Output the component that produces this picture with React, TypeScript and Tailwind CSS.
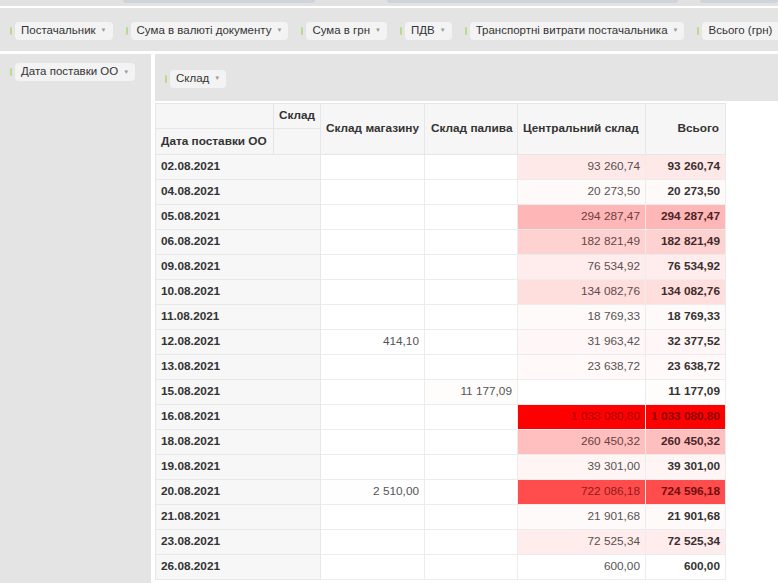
import React from 'react';

type Row = {
  date: string;
  shop?: number;
  fuel?: number;
  central?: number;
  total: number;
};

const rows: Row[] = [
  { date: '02.08.2021', central: 93260.74, total: 93260.74 },
  { date: '04.08.2021', central: 20273.5, total: 20273.5 },
  { date: '05.08.2021', central: 294287.47, total: 294287.47 },
  { date: '06.08.2021', central: 182821.49, total: 182821.49 },
  { date: '09.08.2021', central: 76534.92, total: 76534.92 },
  { date: '10.08.2021', central: 134082.76, total: 134082.76 },
  { date: '11.08.2021', central: 18769.33, total: 18769.33 },
  { date: '12.08.2021', shop: 414.1, central: 31963.42, total: 32377.52 },
  { date: '13.08.2021', central: 23638.72, total: 23638.72 },
  { date: '15.08.2021', fuel: 11177.09, total: 11177.09 },
  { date: '16.08.2021', central: 1033080.8, total: 1033080.8 },
  { date: '18.08.2021', central: 260450.32, total: 260450.32 },
  { date: '19.08.2021', central: 39301.0, total: 39301.0 },
  { date: '20.08.2021', shop: 2510.0, central: 722086.18, total: 724596.18 },
  { date: '21.08.2021', central: 21901.68, total: 21901.68 },
  { date: '23.08.2021', central: 72525.34, total: 72525.34 },
  { date: '26.08.2021', central: 600.0, total: 600.0 },
];

const MAX = 1033080.8;

const fmt = (n?: number) => {
  if (n === undefined) return '';
  const [int, dec] = n.toFixed(2).split('.');
  return int.replace(/\B(?=(\d{3})+(?!\d))/g, ' ') + ',' + dec;
};

// heat map colour, white -> red by share of max
const heat = (n?: number, bold = false) => {
  if (n === undefined) return {};
  const r = n / MAX;
  const c = Math.round(255 * (1 - r));
  const base = bold ? [51, 51, 51] : [85, 85, 85];
  const dark = bold ? [140, 0, 0] : [175, 0, 0];
  const t = base.map((b, i) => Math.round(b + (dark[i] - b) * r));
  return {
    backgroundColor: `rgb(255, ${c}, ${c})`,
    color: `rgb(${t[0]}, ${t[1]}, ${t[2]})`,
  };
};

const Pill = ({ label }: { label: string }) => (
  <div className="flex items-center gap-[3px] shrink-0">
    <span className="w-[2px] h-[8px] bg-[#b9db8c] rounded-sm" />
    <span className="flex items-center h-[18px] px-[6px] rounded-[4px] bg-[#f3f3f3] text-[11.5px] text-[#333] whitespace-nowrap">
      {label}
      <span className="ml-[5px] text-[6px] text-[#999]">▼</span>
    </span>
  </div>
);

const th = 'border border-[#e6e6e6] bg-[#f6f6f6] font-bold text-[#333] whitespace-nowrap';
const td = 'border border-[#ececec] text-right px-[5px] whitespace-nowrap overflow-hidden';

export default function App() {
  return (
    <div className="w-[778px] h-[583px] overflow-hidden bg-white font-['Liberation_Sans',Arial,sans-serif]">
      {/* top strip */}
      <div className="h-[6px] bg-[#e2e2e2] flex items-start">
        <div className="ml-[123px] w-[192px] h-[3px] bg-[#cfd3dc] rounded-b-sm" />
        <div className="ml-[72px] w-[291px] h-[3px] bg-[#cfd3dc] rounded-b-sm" />
        <div className="ml-[22px] flex-1 h-[3px] bg-[#cfd3dc] rounded-b-sm" />
      </div>
      <div className="h-[2px] bg-white" />

      {/* filter fields */}
      <div className="h-[43px] bg-[#e4e4e4] flex items-center gap-[13px] pl-[10px] pt-[2px] overflow-hidden">
        <Pill label="Постачальник" />
        <Pill label="Сума в валюті документу" />
        <Pill label="Сума в грн" />
        <Pill label="ПДВ" />
        <Pill label="Транспортні витрати постачальника" />
        <Pill label="Всього (грн)" />
      </div>
      <div className="h-[3px] bg-white" />

      <div className="flex h-[529px]">
        {/* row fields */}
        <div className="w-[151px] bg-[#e4e4e4] pt-[9px] pl-[10px] shrink-0">
          <Pill label="Дата поставки ОО" />
        </div>
        <div className="w-[4px] bg-white shrink-0" />

        <div className="flex-1 flex flex-col overflow-hidden">
          <div className="h-[47px] shrink-0 bg-[#e4e4e4] flex items-center pl-[10px] pt-[2px]">
            <Pill label="Склад" />
          </div>
          <div className="h-[2px] shrink-0 bg-white" />

          <table className="border-collapse table-fixed w-[570px] text-[11.8px] shrink-0">
            <colgroup>
              <col className="w-[118px]" />
              <col className="w-[47px]" />
              <col className="w-[104px]" />
              <col className="w-[93px]" />
              <col className="w-[128px]" />
              <col className="w-[80px]" />
            </colgroup>
            <thead>
              <tr className="h-[25px]">
                <th className={th} />
                <th className={`${th} text-left px-[5px]`}>Склад</th>
                <th rowSpan={2} className={`${th} text-left px-[5px]`}>
                  Склад магазину
                </th>
                <th rowSpan={2} className={`${th} text-left px-[6px]`}>
                  Склад палива
                </th>
                <th rowSpan={2} className={`${th} text-left px-[5px]`}>
                  Центральний склад
                </th>
                <th rowSpan={2} className={`${th} text-right px-[6px]`}>
                  Всього
                </th>
              </tr>
              <tr className="h-[26px]">
                <th className={`${th} text-left px-[5px]`}>Дата поставки ОО</th>
                <th className={th} />
              </tr>
            </thead>
            <tbody>
              {rows.map(r => (
                <tr key={r.date} className="h-[25px]">
                  <td colSpan={2} className="border border-[#e8e8e8] bg-[#f7f7f7] px-[5px] font-bold text-[#333]">
                    {r.date}
                  </td>
                  <td className={td} style={heat(r.shop)}>
                    {fmt(r.shop)}
                  </td>
                  <td className={td} style={heat(r.fuel)}>
                    {fmt(r.fuel)}
                  </td>
                  <td className={td} style={heat(r.central)}>
                    {fmt(r.central)}
                  </td>
                  <td className={`${td} font-bold`} style={heat(r.total, true)}>
                    {fmt(r.total)}
                  </td>
                </tr>
              ))}
            </tbody>
          </table>
        </div>
      </div>
    </div>
  );
}
